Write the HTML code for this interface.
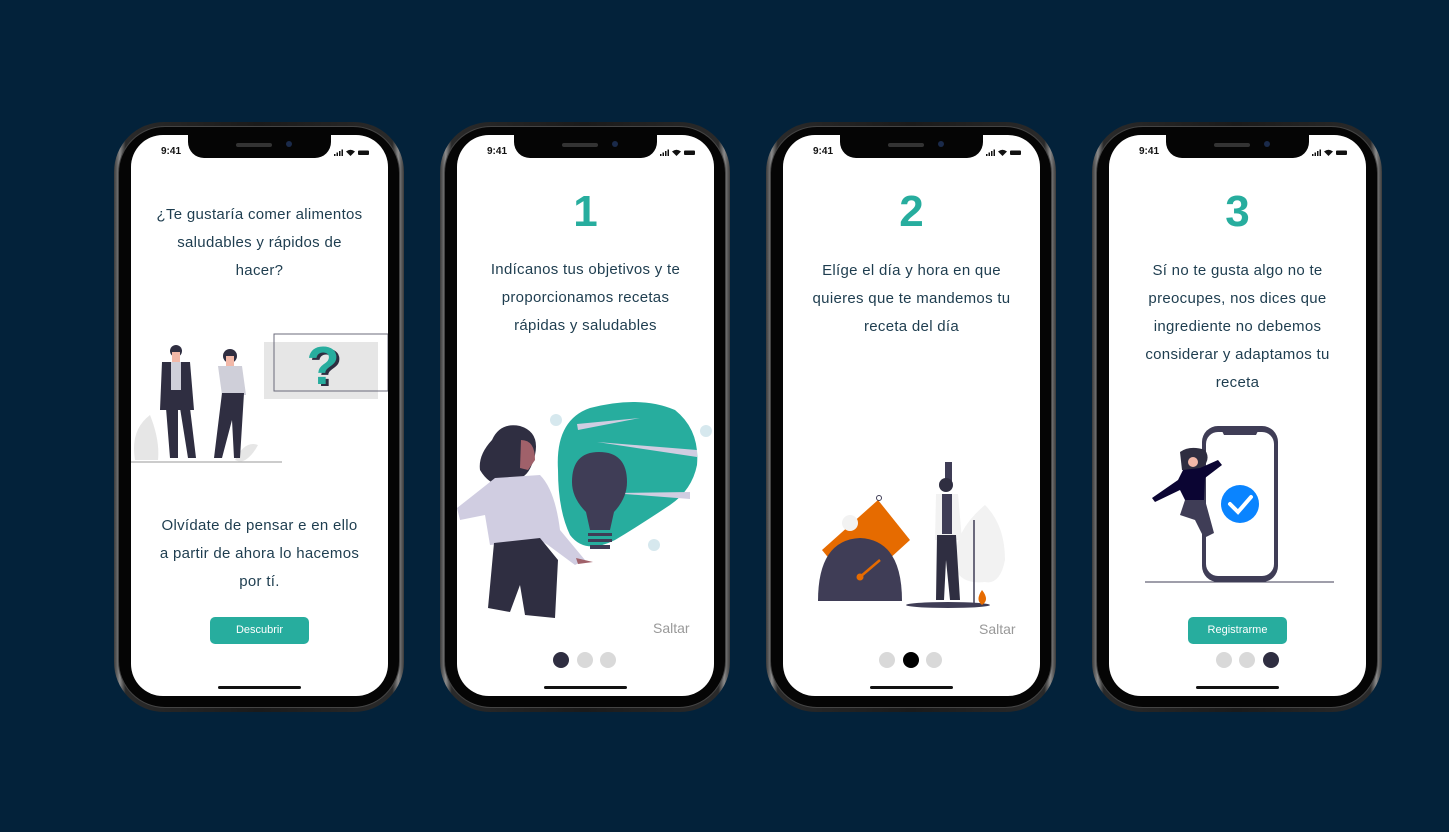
<!DOCTYPE html>
<html><head><meta charset="utf-8"><style>
*{margin:0;padding:0;box-sizing:border-box}
body{width:1449px;height:832px;background:#03223a;position:relative;overflow:hidden;font-family:"Liberation Sans",sans-serif}
.ph{position:absolute;top:122px;width:290px;height:590px;border-radius:50px;background:linear-gradient(90deg,#3a3a3a,#8a8a8a 2%,#2a2a2a 4%,#1a1a1a 50%,#2a2a2a 96%,#8a8a8a 98%,#3a3a3a);}
.ph .in{position:absolute;left:4px;top:4px;right:4px;bottom:4px;border-radius:47px;background:#050505;border:1px solid #444}
.ph .sc{position:absolute;left:17px;top:13px;width:257px;height:561px;border-radius:32px;background:#fff;overflow:hidden}
.notch{position:absolute;left:57px;top:0;width:143px;height:23px;background:#050505;border-radius:0 0 16px 16px}
.notch:after{content:"";position:absolute;left:48px;top:8px;width:36px;height:4px;border-radius:2px;background:#333}
.notch:before{content:"";position:absolute;left:98px;top:6px;width:6px;height:6px;border-radius:3px;background:#1a2a4a}
.time{position:absolute;left:30px;top:11px;font-size:10px;font-weight:bold;color:#111}
.home{position:absolute;left:87px;bottom:7px;width:83px;height:3px;border-radius:2px;background:#111}
.bars{position:absolute;right:18px;top:14px;width:36px;height:7px}
.t{position:absolute;text-align:center;color:#1e3d4f;font-size:15px;line-height:28px;width:257px;left:0;letter-spacing:0.3px}
.num{position:absolute;left:0;width:257px;text-align:center;color:#27ad9e;font-size:44px;font-weight:bold}
.btn{position:absolute;left:79px;width:99px;height:27px;border-radius:5px;background:#27ad9e;color:#fff;font-size:11px;text-align:center;line-height:27px}
.sal{position:absolute;left:196px;font-size:14px;color:#999}
.dot{position:absolute;width:16px;height:16px;border-radius:8px;background:#d9d9d9;top:517px}
</style></head><body>

<!-- phone 1 -->
<div class="ph" style="left:114px"><div class="in"></div><div class="sc">
<div class="notch"></div><div class="time">9:41</div>
<svg class="bars" viewBox="0 0 36 7"><rect x="0" y="5" width="1.5" height="2" fill="#111"/><rect x="2.5" y="3.5" width="1.5" height="3.5" fill="#111"/><rect x="5" y="2" width="1.5" height="5" fill="#111"/><rect x="7.5" y="0.5" width="1.5" height="6.5" fill="#111"/><path d="M12 2.5 Q16.5 -1 21 2.5 L16.5 7Z" fill="#111"/><rect x="24" y="1.5" width="11" height="4.5" rx="1" fill="#111"/></svg>
<div class="t" style="top:66px">¿Te gustaría comer alimentos<br>saludables y rápidos de<br>hacer?</div>
<svg style="position:absolute;left:0;top:0" width="257" height="561" viewBox="131 135 257 561">
<path d="M135 460 Q130 430 150 415 Q160 440 158 460Z" fill="#e6e6e6"/><path d="M235 460 Q245 440 258 445 Q250 460 240 462Z" fill="#e6e6e6"/>
<rect x="264" y="342" width="114" height="57" fill="#e6e6e6"/>
<rect x="274" y="334" width="114" height="57" fill="none" stroke="#6b6b7b" stroke-width="1"/>
<text x="326" y="386" text-anchor="middle" font-size="54" font-weight="bold" font-family="Liberation Sans" fill="#2f2e41">?</text>
<text x="323" y="384" text-anchor="middle" font-size="54" font-weight="bold" font-family="Liberation Sans" fill="#27ad9e">?</text>
<line x1="131" y1="462" x2="282" y2="462" stroke="#bbb" stroke-width="1.5"/>
<circle cx="176" cy="351" r="6" fill="#2f2e41"/><rect x="172" y="352" width="8" height="10" fill="#f2b8a8"/>
<path d="M162 362 L190 362 L194 410 L160 410Z" fill="#2f2e41"/><rect x="171" y="362" width="10" height="28" fill="#cfcfd9"/>
<path d="M166 408 L178 408 L178 458 L170 458Z M180 408 L190 408 L196 458 L188 458Z" fill="#2f2e41"/>
<circle cx="230" cy="356" r="7" fill="#2f2e41"/><rect x="226" y="356" width="8" height="10" fill="#f2b8a8"/>
<path d="M218 366 L242 366 L246 395 L222 395Z" fill="#cfcfd9"/>
<path d="M222 393 L244 393 L240 458 L234 458 L232 420 L222 458 L214 458Z" fill="#2f2e41"/>
</svg>
<div class="t" style="top:377px;font-weight:500">Olvídate de pensar e en ello<br>a partir de ahora lo hacemos<br>por tí.</div>
<div class="btn" style="top:482px">Descubrir</div>
<div class="home"></div>
</div></div>

<!-- phone 2 -->
<div class="ph" style="left:440px"><div class="in"></div><div class="sc">
<div class="notch"></div><div class="time">9:41</div>
<svg class="bars" viewBox="0 0 36 7"><rect x="0" y="5" width="1.5" height="2" fill="#111"/><rect x="2.5" y="3.5" width="1.5" height="3.5" fill="#111"/><rect x="5" y="2" width="1.5" height="5" fill="#111"/><rect x="7.5" y="0.5" width="1.5" height="6.5" fill="#111"/><path d="M12 2.5 Q16.5 -1 21 2.5 L16.5 7Z" fill="#111"/><rect x="24" y="1.5" width="11" height="4.5" rx="1" fill="#111"/></svg>
<div class="num" style="top:52px">1</div>
<div class="t" style="top:121px">Indícanos tus objetivos y te<br>proporcionamos recetas<br>rápidas y saludables</div>
<svg style="position:absolute;left:0;top:0" width="257" height="561" viewBox="457 135 257 561">
<path d="M558 470 Q555 420 590 408 Q640 395 675 410 Q700 430 697 465 Q692 490 670 505 Q640 525 615 540 Q585 555 570 535 Q558 510 558 470Z" fill="#27ad9e"/>
<path d="M577 424 L640 418 L578 430Z M597 442 L697 450 L697 457Z M612 493 L690 492 L690 499Z" fill="#d0cde1"/>
<circle cx="556" cy="420" r="6" fill="#d6e8ee"/><circle cx="706" cy="431" r="6" fill="#d6e8ee"/><circle cx="654" cy="545" r="6" fill="#d6e8ee"/>
<path d="M599 452 Q627 452 627 482 Q627 498 614 512 L610 530 L590 530 L586 512 Q572 498 572 482 Q572 452 599 452Z" fill="#3f3d56"/>
<rect x="588" y="533" width="24" height="3" fill="#3f3d56"/><rect x="588" y="539" width="24" height="3" fill="#3f3d56"/><rect x="590" y="545" width="20" height="4" fill="#3f3d56"/>
<path d="M492 440 Q500 422 520 426 Q540 432 535 455 Q530 475 520 478 Q495 495 480 470 Q478 455 492 440Z" fill="#2f2e41"/>
<path d="M521 440 Q535 440 535 460 L528 470 L520 468Z" fill="#a0616a"/>
<path d="M495 478 L540 475 Q555 490 560 530 L585 560 L575 565 L548 545 L540 540 L490 545 L485 515 L460 520 L457 508 Q480 490 495 478Z" fill="#d0cde1"/>
<path d="M494 543 L540 538 L558 560 L555 618 L525 615 L520 585 L510 612 L488 608Z" fill="#2f2e41"/>
<path d="M576 558 L593 562 L578 564Z" fill="#a0616a"/>
</svg>
<div class="sal" style="top:485px">Saltar</div>
<div class="dot" style="left:96px;background:#2f2e41"></div><div class="dot" style="left:120px"></div><div class="dot" style="left:143px"></div>
<div class="home"></div>
</div></div>

<!-- phone 3 -->
<div class="ph" style="left:766px"><div class="in"></div><div class="sc">
<div class="notch"></div><div class="time">9:41</div>
<svg class="bars" viewBox="0 0 36 7"><rect x="0" y="5" width="1.5" height="2" fill="#111"/><rect x="2.5" y="3.5" width="1.5" height="3.5" fill="#111"/><rect x="5" y="2" width="1.5" height="5" fill="#111"/><rect x="7.5" y="0.5" width="1.5" height="6.5" fill="#111"/><path d="M12 2.5 Q16.5 -1 21 2.5 L16.5 7Z" fill="#111"/><rect x="24" y="1.5" width="11" height="4.5" rx="1" fill="#111"/></svg>
<div class="num" style="top:52px">2</div>
<div class="t" style="top:122px">Elíge el día y hora en que<br>quieres que te mandemos tu<br>receta del día</div>
<svg style="position:absolute;left:0;top:0" width="257" height="561" viewBox="783 135 257 561">
<path d="M822 550 L878 500 L910 540 L855 590Z" fill="#e66b00"/><circle cx="879" cy="498" r="2.5" fill="none" stroke="#3f3d56"/>
<circle cx="850" cy="523" r="8" fill="#f2f2f2"/>
<path d="M818 601 Q818 540 860 538 Q902 540 902 601Z" fill="#3f3d56"/>
<line x1="860" y1="577" x2="880" y2="560" stroke="#e66b00" stroke-width="2.5"/><circle cx="860" cy="577" r="3.5" fill="#e66b00"/>
<path d="M985 505 Q1005 525 1005 560 Q1000 585 985 582 Q955 585 955 560 Q955 530 985 505Z" fill="#f2f2f2"/>
<line x1="974" y1="520" x2="974" y2="605" stroke="#3f3d56" stroke-width="1.5"/>
<rect x="945" y="462" width="7" height="20" fill="#3f3d56"/>
<circle cx="946" cy="485" r="7" fill="#2f2e41"/>
<path d="M936 494 L958 494 L962 540 L935 540Z" fill="#f2f2f2"/><rect x="942" y="494" width="10" height="40" fill="#3f3d56"/>
<path d="M937 535 L956 535 L960 600 L950 600 L946 560 L944 600 L936 600Z" fill="#2f2e41"/>
<ellipse cx="948" cy="605" rx="42" ry="3" fill="#3f3d56"/>
<path d="M982 590 Q990 600 982 605 Q975 600 982 590Z" fill="#e66b00"/>
</svg>
<div class="sal" style="top:486px">Saltar</div>
<div class="dot" style="left:96px"></div><div class="dot" style="left:120px;background:#000"></div><div class="dot" style="left:143px"></div>
<div class="home"></div>
</div></div>

<!-- phone 4 -->
<div class="ph" style="left:1092px"><div class="in"></div><div class="sc">
<div class="notch"></div><div class="time">9:41</div>
<svg class="bars" viewBox="0 0 36 7"><rect x="0" y="5" width="1.5" height="2" fill="#111"/><rect x="2.5" y="3.5" width="1.5" height="3.5" fill="#111"/><rect x="5" y="2" width="1.5" height="5" fill="#111"/><rect x="7.5" y="0.5" width="1.5" height="6.5" fill="#111"/><path d="M12 2.5 Q16.5 -1 21 2.5 L16.5 7Z" fill="#111"/><rect x="24" y="1.5" width="11" height="4.5" rx="1" fill="#111"/></svg>
<div class="num" style="top:52px">3</div>
<div class="t" style="top:122px">Sí no te gusta algo no te<br>preocupes, nos dices que<br>ingrediente no debemos<br>considerar y adaptamos tu<br>receta</div>
<svg style="position:absolute;left:0;top:0" width="257" height="561" viewBox="1109 135 257 561">
<rect x="1202" y="426" width="76" height="156" rx="16" fill="#3f3d56"/>
<rect x="1206" y="432" width="68" height="144" rx="12" fill="#fff"/>
<path d="M1220 427 L1260 427 L1256 435 L1224 435Z" fill="#3f3d56"/>
<circle cx="1240" cy="504" r="19" fill="#0a84ff"/>
<path d="M1230 504 L1238 512 L1251 497" stroke="#fff" stroke-width="4" fill="none" stroke-linecap="round"/>
<path d="M1180 452 Q1190 445 1205 450 Q1212 460 1200 470 L1182 470Z" fill="#2f2e41"/>
<circle cx="1193" cy="462" r="5" fill="#f2b8a8"/>
<path d="M1183 470 L1200 468 L1218 460 L1222 465 L1205 478 L1204 500 L1185 500 L1180 490 L1155 502 L1152 498 L1178 480Z" fill="#0b0533"/>
<path d="M1185 500 L1205 500 L1214 533 L1204 538 L1195 520 L1180 515Z" fill="#3f3d56"/>
<line x1="1145" y1="582" x2="1334" y2="582" stroke="#3f3d56" stroke-width="1"/>
</svg>
<div class="btn" style="top:482px">Registrarme</div>
<div class="dot" style="left:107px"></div><div class="dot" style="left:130px"></div><div class="dot" style="left:154px;background:#2f2e41"></div>
<div class="home"></div>
</div></div>

</body></html>
